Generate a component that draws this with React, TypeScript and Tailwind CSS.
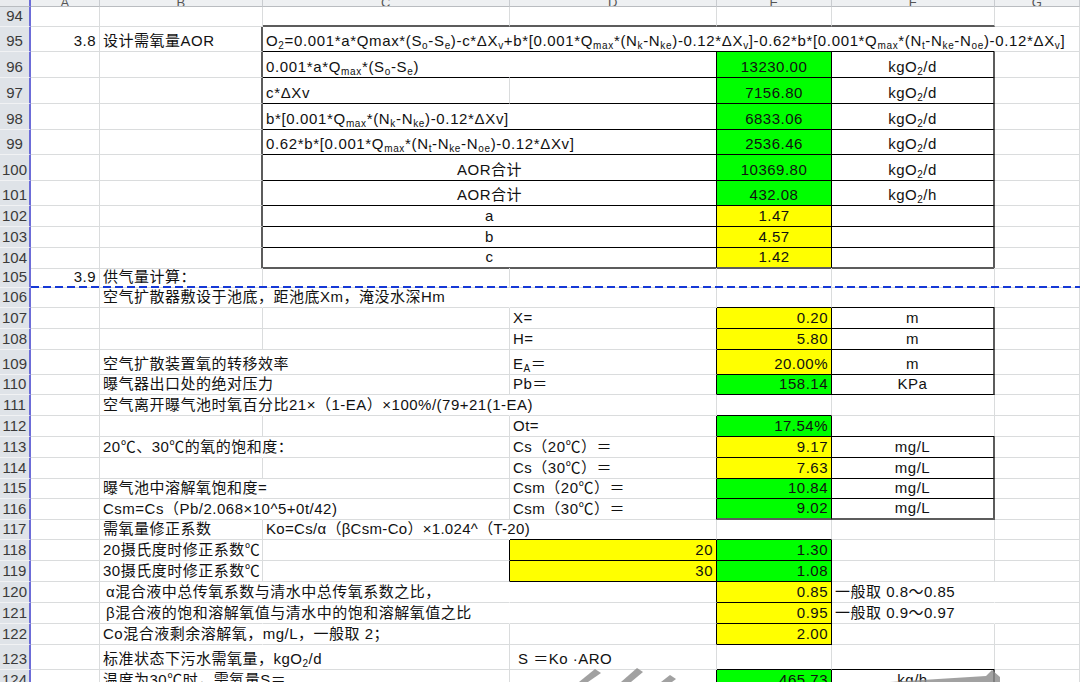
import type { ReactNode } from "react";

// Spreadsheet view: rows 94–124 of an aeration (AOR) calculation sheet.
// Column tracks: row header | A | B | C | D | E | F | G

const COLS =
  "grid grid-cols-[31px_69px_163px_247px_207px_115px_163px_85px]";
const FONT = "font-['Liberation_Sans','Noto_Sans_CJK_SC',sans-serif]";

// table borders
const TB = "border-b-black";
const TR = "border-r-black";
const OUT_R = "border-r-2 border-r-[#5c5c5c]";
const OUT_B = "border-b-2 border-b-[#5c5c5c]";
const NR = "border-r-transparent";
const GREEN = "bg-[#00ff00]";
const YELLOW = "bg-[#ffff00]";
// formulas are set a little looser, like the sheet's fixed-width font
const FX = "tracking-[0.65px]";

function Sb({ children }: { children: ReactNode }) {
  return <sub className="text-[10px]">{children}</sub>;
}

function C({
  span,
  className = "",
  children,
}: {
  span?: 2 | 4;
  className?: string;
  children?: ReactNode;
}) {
  const sp = span === 2 ? "col-span-2" : span === 4 ? "col-span-4" : "";
  return (
    <div
      className={`${sp} min-w-0 flex items-end whitespace-nowrap px-[3px] pb-[1px] leading-[18px] border-r border-b border-[#dadcdd] ${className}`}
    >
      {children}
    </div>
  );
}

function Row({ n, h, children }: { n: number; h: string; children: ReactNode }) {
  return (
    <div className={`${COLS} ${h}`}>
      <div className="flex items-end justify-center pb-[1px] leading-[18px] tracking-normal bg-[#dfe3e8] border-r-2 border-r-[#6c6cd8] border-b border-b-[#f1f2f4] text-[15px] text-[#3a3a3a] font-['Liberation_Sans',sans-serif]">
        {n}
      </div>
      {children}
    </div>
  );
}

function ColHeader() {
  const letters = ["A", "B", "C", "D", "E", "F", "G"];
  return (
    <div className={`${COLS} h-[7px] overflow-hidden`}>
      <div className="bg-[#e9ebee] border-r-2 border-r-[#6c6cd8] border-b border-b-[#b9bcc0]" />
      {letters.map((l) => (
        <div
          key={l}
          className="flex items-end justify-center overflow-hidden bg-[#eef0f2] border-r border-r-[#c9ccd0] border-b border-b-[#b9bcc0] text-[13px] leading-[14px] text-[#555] font-['Liberation_Sans',sans-serif]"
        >
          <span className="-mb-[4px]">{l}</span>
        </div>
      ))}
    </div>
  );
}

function Watermark() {
  return (
    <svg
      className="absolute left-0 top-0 pointer-events-none"
      width="1080"
      height="682"
      viewBox="0 0 1080 682"
    >
      <g fill="#8a8a8a" opacity="0.8">
        <polygon points="579,682 595,669 601,673 588,682" />
        <polygon points="621,682 637,668 643,672 631,682" />
        <polygon points="661,682 670,675 676,679 672,682" />
        <polygon points="890,682 986,676 992,670 1000,677 1000,682" />
      </g>
    </svg>
  );
}

export default function App() {
  return (
    <div className={`relative w-[1080px] h-[682px] overflow-hidden bg-white text-[15px] tracking-[0.5px] text-[#111] ${FONT}`}>
      <ColHeader />

      <Row n={94} h="h-[20px]">
        <C /> <C />
        <C className={OUT_B} />
        <C className={OUT_B} />
        <C className={OUT_B} />
        <C className={OUT_B} />
        <C />
      </Row>

      <Row n={95} h="h-[25px]">
        <C className="justify-end">3.8</C>
        <C className={OUT_R}>设计需氧量AOR</C>
        <C span={4} className={`${TB} ${NR}`}>
          <span className={FX}>
            O<Sb>2</Sb>=0.001*a*Qmax*(S<Sb>o</Sb>-S<Sb>e</Sb>)-c*ΔX<Sb>v</Sb>+b*[0.001*Q<Sb>max</Sb>*(N<Sb>k</Sb>-N<Sb>ke</Sb>)-0.12*ΔX<Sb>v</Sb>]-0.62*b*[0.001*Q<Sb>max</Sb>*(N<Sb>t</Sb>-N<Sb>ke</Sb>-N<Sb>oe</Sb>)-0.12*ΔX<Sb>v</Sb>]
          </span>
        </C>
        <C />
      </Row>

      <Row n={96} h="h-[26px]">
        <C /> <C className={OUT_R} />
        <C className={`${TB} ${NR}`}>
          <span className={FX}>
            0.001*a*Q<Sb>max</Sb>*(S<Sb>o</Sb>-S<Sb>e</Sb>)
          </span>
        </C>
        <C className={`${TB} ${TR}`} />
        <C className={`${GREEN} ${TB} ${TR} justify-center`}>13230.00</C>
        <C className={`${TB} ${OUT_R} justify-center`}>
          <span>
            kgO<Sb>2</Sb>/d
          </span>
        </C>
        <C />
      </Row>

      <Row n={97} h="h-[26px]">
        <C /> <C className={OUT_R} />
        <C className={TB}>
          <span className={FX}>c*ΔXv</span>
        </C>
        <C className={`${TB} ${TR}`} />
        <C className={`${GREEN} ${TB} ${TR} justify-center`}>7156.80</C>
        <C className={`${TB} ${OUT_R} justify-center`}>
          <span>
            kgO<Sb>2</Sb>/d
          </span>
        </C>
        <C />
      </Row>

      <Row n={98} h="h-[26px]">
        <C /> <C className={OUT_R} />
        <C span={2} className={`${TB} ${TR}`}>
          <span className={FX}>
            b*[0.001*Q<Sb>max</Sb>*(N<Sb>k</Sb>-N<Sb>ke</Sb>)-0.12*ΔXv]
          </span>
        </C>
        <C className={`${GREEN} ${TB} ${TR} justify-center`}>6833.06</C>
        <C className={`${TB} ${OUT_R} justify-center`}>
          <span>
            kgO<Sb>2</Sb>/d
          </span>
        </C>
        <C />
      </Row>

      <Row n={99} h="h-[25px]">
        <C /> <C className={OUT_R} />
        <C span={2} className={`${TB} ${TR}`}>
          <span className={FX}>
            0.62*b*[0.001*Q<Sb>max</Sb>*(N<Sb>t</Sb>-N<Sb>ke</Sb>-N<Sb>oe</Sb>)-0.12*ΔXv]
          </span>
        </C>
        <C className={`${GREEN} ${TB} ${TR} justify-center`}>2536.46</C>
        <C className={`${TB} ${OUT_R} justify-center`}>
          <span>
            kgO<Sb>2</Sb>/d
          </span>
        </C>
        <C />
      </Row>

      <Row n={100} h="h-[26px]">
        <C /> <C className={OUT_R} />
        <C span={2} className={`${TB} ${TR} justify-center`}>AOR合计</C>
        <C className={`${GREEN} ${TB} ${TR} justify-center`}>10369.80</C>
        <C className={`${TB} ${OUT_R} justify-center`}>
          <span>
            kgO<Sb>2</Sb>/d
          </span>
        </C>
        <C />
      </Row>

      <Row n={101} h="h-[25px]">
        <C /> <C className={OUT_R} />
        <C span={2} className={`${TB} ${TR} justify-center`}>AOR合计</C>
        <C className={`${GREEN} ${TB} ${TR} justify-center`}>432.08</C>
        <C className={`${TB} ${OUT_R} justify-center`}>
          <span>
            kgO<Sb>2</Sb>/h
          </span>
        </C>
        <C />
      </Row>

      <Row n={102} h="h-[21px]">
        <C /> <C className={OUT_R} />
        <C span={2} className={`${TB} ${TR} justify-center`}>a</C>
        <C className={`${YELLOW} ${TB} ${TR} justify-center`}>1.47</C>
        <C className={`${TB} ${OUT_R}`} />
        <C />
      </Row>

      <Row n={103} h="h-[21px]">
        <C /> <C className={OUT_R} />
        <C span={2} className={`${TB} ${TR} justify-center`}>b</C>
        <C className={`${YELLOW} ${TB} ${TR} justify-center`}>4.57</C>
        <C className={`${TB} ${OUT_R}`} />
        <C />
      </Row>

      <Row n={104} h="h-[20px]">
        <C /> <C className={OUT_R} />
        <C span={2} className={`${OUT_B} ${TR} justify-center`}>c</C>
        <C className={`${YELLOW} ${OUT_B} ${TR} justify-center`}>1.42</C>
        <C className={`${OUT_B} ${OUT_R}`} />
        <C />
      </Row>

      <div className="relative">
        <Row n={105} h="h-[20px]">
          <C className="justify-end">3.9</C>
          <C>供气量计算：</C>
          <C /> <C /> <C /> <C /> <C />
        </Row>
        {/* page-break marker */}
        <div className="absolute left-[31px] right-0 bottom-0 h-[2px] bg-[repeating-linear-gradient(90deg,#1538d6_0_8px,transparent_8px_12px)]" />
      </div>

      <Row n={106} h="h-[20px]">
        <C />
        <C className={NR}>空气扩散器敷设于池底，距池底Xm，淹没水深Hm</C>
        <C className={NR} />
        <C />
        <C className={TB} />
        <C className={TB} />
        <C />
      </Row>

      <Row n={107} h="h-[21px]">
        <C /> <C /> <C />
        <C className={TR}>X=</C>
        <C className={`${YELLOW} ${TB} ${TR} justify-end`}>0.20</C>
        <C className={`${TB} ${OUT_R} justify-center`}>m</C>
        <C />
      </Row>

      <Row n={108} h="h-[21px]">
        <C /> <C /> <C />
        <C className={TR}>H=</C>
        <C className={`${YELLOW} ${TB} ${TR} justify-end`}>5.80</C>
        <C className={`${TB} ${OUT_R} justify-center`}>m</C>
        <C />
      </Row>

      <Row n={109} h="h-[25px]">
        <C />
        <C className={NR}>空气扩散装置氧的转移效率</C>
        <C />
        <C className={TR}>
          <span>
            E<Sb>A</Sb>＝
          </span>
        </C>
        <C className={`${YELLOW} ${TB} ${TR} justify-end`}>20.00%</C>
        <C className={`${TB} ${OUT_R} justify-center`}>m</C>
        <C />
      </Row>

      <Row n={110} h="h-[20px]">
        <C />
        <C className={NR}>曝气器出口处的绝对压力</C>
        <C />
        <C className={TR}>Pb＝</C>
        <C className={`${GREEN} ${TB} ${TR} justify-end`}>158.14</C>
        <C className={`${TB} ${OUT_R} justify-center`}>KPa</C>
        <C />
      </Row>

      <Row n={111} h="h-[21px]">
        <C />
        <C className={NR}>空气离开曝气池时氧百分比21×（1-EA）×100%/(79+21(1-EA)</C>
        <C className={NR} />
        <C />
        <C className={TB} />
        <C />
        <C />
      </Row>

      <Row n={112} h="h-[21px]">
        <C /> <C /> <C />
        <C className={TR}>Ot=</C>
        <C className={`${GREEN} ${TB} ${TR} justify-end`}>17.54%</C>
        <C className={TB} />
        <C />
      </Row>

      <Row n={113} h="h-[21px]">
        <C />
        <C className={NR}>20℃、30℃的氧的饱和度：</C>
        <C />
        <C className={TR}>Cs（20℃）＝</C>
        <C className={`${YELLOW} ${TB} ${TR} justify-end`}>9.17</C>
        <C className={`${TB} ${OUT_R} justify-center`}>mg/L</C>
        <C />
      </Row>

      <Row n={114} h="h-[21px]">
        <C /> <C /> <C />
        <C className={TR}>Cs（30℃）＝</C>
        <C className={`${YELLOW} ${TB} ${TR} justify-end`}>7.63</C>
        <C className={`${TB} ${OUT_R} justify-center`}>mg/L</C>
        <C />
      </Row>

      <Row n={115} h="h-[20px]">
        <C />
        <C className={NR}>曝气池中溶解氧饱和度=</C>
        <C />
        <C className={TR}>Csm（20℃）＝</C>
        <C className={`${GREEN} ${TB} ${TR} justify-end`}>10.84</C>
        <C className={`${TB} ${OUT_R} justify-center`}>mg/L</C>
        <C />
      </Row>

      <Row n={116} h="h-[21px]">
        <C />
        <C className={NR}>Csm=Cs（Pb/2.068×10^5+0t/42)</C>
        <C />
        <C className={TR}>Csm（30℃）＝</C>
        <C className={`${GREEN} ${OUT_B} ${TR} justify-end`}>9.02</C>
        <C className={`${OUT_B} ${OUT_R} justify-center`}>mg/L</C>
        <C />
      </Row>

      <Row n={117} h="h-[20px]">
        <C />
        <C>需氧量修正系数</C>
        <C className={`${NR} tracking-[0.3px]`}>Ko=Cs/α（βCsm-Co）×1.024^（T-20)</C>
        <C className={TB} />
        <C className={TB} />
        <C />
        <C />
      </Row>

      <Row n={118} h="h-[21px]">
        <C />
        <C>20摄氏度时修正系数℃</C>
        <C className={TR} />
        <C className={`${YELLOW} ${TB} ${TR} justify-end`}>20</C>
        <C className={`${GREEN} ${TB} ${TR} justify-end`}>1.30</C>
        <C />
        <C />
      </Row>

      <Row n={119} h="h-[21px]">
        <C />
        <C>30摄氏度时修正系数℃</C>
        <C className={TR} />
        <C className={`${YELLOW} ${TB} ${TR} justify-end`}>30</C>
        <C className={`${GREEN} ${TB} ${TR} justify-end`}>1.08</C>
        <C />
        <C />
      </Row>

      <Row n={120} h="h-[21px]">
        <C />
        <C className={`${NR} pl-[6px]`}>α混合液中总传氧系数与清水中总传氧系数之比，</C>
        <C className={NR} />
        <C className={TR} />
        <C className={`${YELLOW} ${TB} ${TR} justify-end`}>0.85</C>
        <C className={NR}>一般取 0.8～0.85</C>
        <C />
      </Row>

      <Row n={121} h="h-[21px]">
        <C />
        <C className={`${NR} pl-[6px]`}>β混合液的饱和溶解氧值与清水中的饱和溶解氧值之比</C>
        <C className={NR} />
        <C className={TR} />
        <C className={`${YELLOW} ${TB} ${TR} justify-end`}>0.95</C>
        <C className={NR}>一般取 0.9～0.97</C>
        <C />
      </Row>

      <Row n={122} h="h-[21px]">
        <C />
        <C className={NR}>Co混合液剩余溶解氧，mg/L，一般取 2；</C>
        <C />
        <C className={TR} />
        <C className={`${YELLOW} ${TB} ${TR} justify-end`}>2.00</C>
        <C />
        <C />
      </Row>

      <Row n={123} h="h-[25px]">
        <C />
        <C className={NR}>
          <span>
            标准状态下污水需氧量，kgO<Sb>2</Sb>/d
          </span>
        </C>
        <C />
        <C className="pl-[8px]">S ＝Ko ·ARO</C>
        <C className={TB} />
        <C className={TB} />
        <C />
      </Row>

      <Row n={124} h="h-[21px]">
        <C />
        <C className={NR}>温度为30℃时，需氧量S＝</C>
        <C />
        <C className={TR} />
        <C className={`${GREEN} ${TB} ${TR} justify-end`}>465.73</C>
        <C className={`${TB} ${OUT_R} justify-center`}>kg/h</C>
        <C />
      </Row>

      <Watermark />
    </div>
  );
}
